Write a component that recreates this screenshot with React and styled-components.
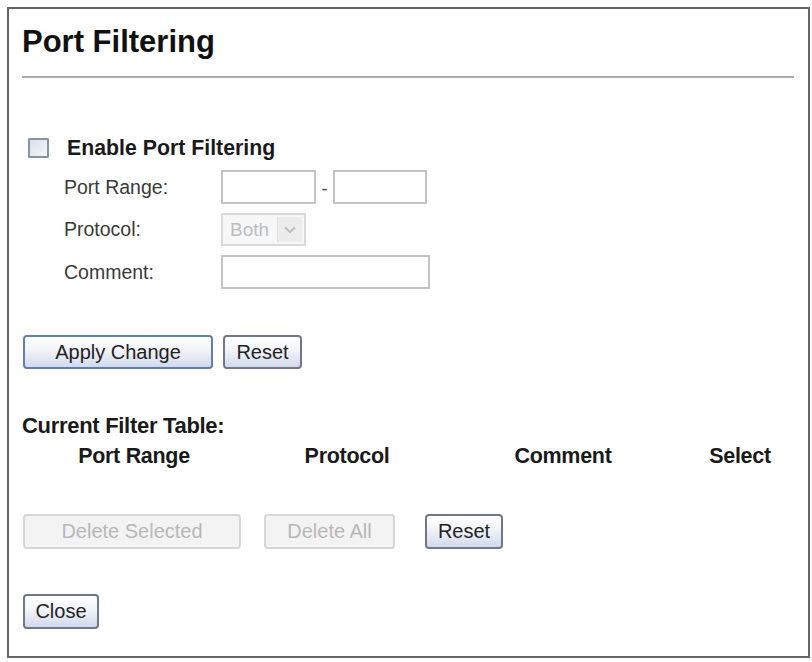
import React from 'react';
import styled, { createGlobalStyle } from 'styled-components';

const GlobalStyle = createGlobalStyle`
  body {
    margin: 0;
    background: #fff;
    font-family: "Liberation Sans", Arial, sans-serif;
  }
`;

const Frame = styled.div`
  box-sizing: border-box;
  margin: 7px 0 0 7px;
  width: 803px;
  height: 651px;
  border: 2px solid #666;
  padding: 15px 14px 0 13px;
  background: #fff;
`;

const Title = styled.h1`
  margin: 0;
  font-size: 31px;
  line-height: 36px;
  font-weight: bold;
  color: #111;
`;

const Rule = styled.div`
  margin-top: 16px;
  height: 2px;
  background: #adadad;
`;

const EnableRow = styled.label`
  display: flex;
  align-items: center;
  height: 24px;
  margin-top: 58px;
  padding-left: 6px;
  gap: 18px;
  font-size: 21.3px;
  font-weight: bold;
  color: #1a1a1a;
`;

const CheckBox = styled.span`
  box-sizing: border-box;
  width: 21px;
  height: 20px;
  border: 2px solid #8595a8;
  border-radius: 1px;
  background: linear-gradient(135deg, #d9e0e8 0%, #f4f6f9 100%);
`;

const FormGrid = styled.div`
  display: grid;
  grid-template-columns: 157px auto;
  grid-auto-rows: 34px;
  row-gap: 8.5px;
  margin: 10px 0 0 42px;
  align-items: center;
`;

const Label = styled.span`
  font-size: 19.5px;
  color: #3a3a3a;
`;

const Field = styled.div`
  display: flex;
  align-items: center;
`;

const TextBox = styled.input`
  box-sizing: border-box;
  width: ${({ w }) => w}px;
  height: 34px;
  border: 2px solid #c4c4c4;
  background: #fff;
  padding: 0 4px;
  margin: 0;
  font: inherit;
`;

const Dash = styled.span`
  width: 17px;
  text-align: center;
  font-size: 18px;
  color: #444;
  padding-top: 4px;
`;

const SelectBox = styled.div`
  box-sizing: border-box;
  display: flex;
  align-items: center;
  justify-content: space-between;
  width: 85px;
  height: 33px;
  border: 2px solid #dadada;
  background: #f7f7f7;
  padding: 0 2px 0 7px;
  font-size: 19px;
  color: #bdbdbd;
`;

const Arrow = styled.span`
  display: flex;
  align-items: center;
  justify-content: center;
  width: 24px;
  height: 25px;
  background: #ececec;
  border-left: 1px solid #e2e2e2;
`;

const ButtonRow = styled.div`
  display: flex;
  align-items: center;
  gap: 10px;
  margin-top: ${({ top }) => top}px;
  padding-left: 1px;
`;

const Button = styled.button`
  box-sizing: border-box;
  width: ${({ w }) => w}px;
  height: ${({ h }) => h || 35}px;
  margin: 0;
  padding: 0;
  font-family: "Liberation Sans", Arial, sans-serif;
  font-size: 20px;
  border-radius: 4px;
  color: ${({ disabled }) => (disabled ? '#b8b8b8' : '#222')};
  border: 2px solid
    ${({ primary, disabled }) => (disabled ? '#d6d6d6' : primary ? '#5f7fb4' : '#6e7886')};
  background: ${({ disabled }) =>
    disabled
      ? '#f3f3f3'
      : 'linear-gradient(180deg, #ffffff 0%, #f1f3f8 45%, #d2d9ec 100%)'};
  cursor: ${({ disabled }) => (disabled ? 'default' : 'pointer')};
`;

const SectionTitle = styled.div`
  margin-top: 45px;
  font-size: 22px;
  line-height: 24px;
  font-weight: bold;
  color: #1a1a1a;
  letter-spacing: -0.3px;
`;

const TableHead = styled.div`
  display: grid;
  grid-template-columns: 224px 202px 230px 1fr;
  margin: 6px -8px 0 0;
`;

const HeadCell = styled.div`
  text-align: center;
  font-size: 21.5px;
  line-height: 24px;
  font-weight: bold;
  color: #1a1a1a;
  letter-spacing: -0.3px;
`;

export default function App() {
  return (
    <>
      <GlobalStyle />
      <Frame>
        <Title>Port Filtering</Title>
        <Rule />

        <EnableRow>
          <CheckBox />
          Enable Port Filtering
        </EnableRow>

        <FormGrid>
          <Label>Port Range:</Label>
          <Field>
            <TextBox w={95} />
            <Dash>-</Dash>
            <TextBox w={94} />
          </Field>
          <Label>Protocol:</Label>
          <Field>
            <SelectBox>
              Both
              <Arrow>
                <svg width="12" height="8" viewBox="0 0 12 8">
                  <path d="M1 1.5 L6 6 L11 1.5" fill="none" stroke="#bcbcbc" strokeWidth="2" />
                </svg>
              </Arrow>
            </SelectBox>
          </Field>
          <Label>Comment:</Label>
          <Field>
            <TextBox w={209} />
          </Field>
        </FormGrid>

        <ButtonRow top={46}>
          <Button w={190} h={34} primary>Apply Change</Button>
          <Button w={79} h={34}>Reset</Button>
        </ButtonRow>

        <SectionTitle>Current Filter Table:</SectionTitle>
        <TableHead>
          <HeadCell>Port Range</HeadCell>
          <HeadCell>Protocol</HeadCell>
          <HeadCell>Comment</HeadCell>
          <HeadCell>Select</HeadCell>
        </TableHead>

        <ButtonRow top={46}>
          <Button w={218} disabled>Delete Selected</Button>
          <Button w={131} disabled style={{ marginLeft: 13 }}>Delete All</Button>
          <Button w={78} style={{ marginLeft: 20 }}>Reset</Button>
        </ButtonRow>

        <ButtonRow top={45}>
          <Button w={76}>Close</Button>
        </ButtonRow>
      </Frame>
    </>
  );
}
